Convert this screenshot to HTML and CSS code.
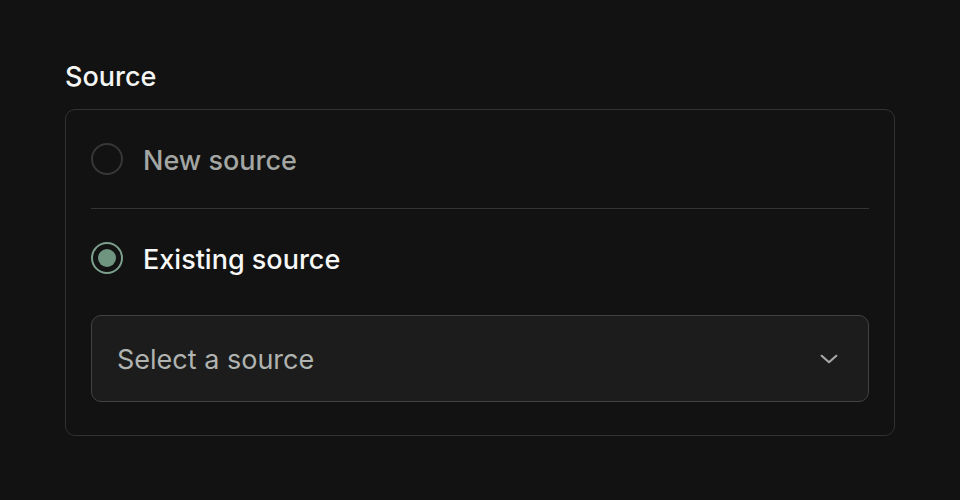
FILE: index.html
```html
<!DOCTYPE html>
<html>
<head>
<meta charset="utf-8">
<link rel="stylesheet" href="styles.css">
</head>
<body>
<div class="page">
  <div class="field">
    <div class="label">Source</div>
    <div class="card">
      <div class="option">
        <span class="radio"></span>
        <span class="opt-text muted">New source</span>
      </div>
      <div class="divider"></div>
      <div class="option">
        <span class="radio checked"><span class="dot"></span></span>
        <span class="opt-text active">Existing source</span>
      </div>
      <div class="select">
        <span class="placeholder">Select a source</span>
        <svg class="chevron" width="22" height="22" viewBox="0 0 24 24" fill="none" stroke="currentColor" stroke-width="2.4" stroke-linecap="round" stroke-linejoin="round"><path d="M4 8.5l8 7 8-7"/></svg>
      </div>
    </div>
  </div>
</div>
</body>
</html>
```
FILE: styles.css
```css
html, body {
  margin: 0;
  padding: 0;
  background: #111211;
  font-family: Inter, "Noto Sans", "Liberation Sans", sans-serif;
}
.page {
  padding: 59px 65px 0 65px;
  width: 830px;
}
.label {
  color: #f4f5f4;
  font-size: 27px;
  font-weight: 500;
  line-height: 36px;
  margin-bottom: 14px;
}
.card {
  border: 1px solid #313331;
  border-radius: 10px;
  padding: 0 25px 33px 25px;
}
.option {
  display: flex;
  align-items: center;
  height: 98px;
  gap: 20px;
}
.radio {
  box-sizing: border-box;
  width: 32px;
  height: 32px;
  border-radius: 50%;
  border: 2px solid #363836;
  display: flex;
  align-items: center;
  justify-content: center;
  flex: none;
}
.radio.checked {
  border-color: #7d9f8d;
}
.dot {
  width: 18px;
  height: 18px;
  border-radius: 50%;
  background: #6f9581;
}
.opt-text {
  font-size: 27px;
  font-weight: 500;
  padding-top: 2px;
}
.muted { color: #a3a6a3; }
.active { color: #f6f7f6; }
.divider {
  height: 1px;
  background: #333533;
}
.select {
  margin-top: 8px;
  height: 85px;
  border: 1px solid #414341;
  border-radius: 10px;
  background: #1b1c1b;
  display: flex;
  align-items: center;
  justify-content: space-between;
  padding: 0 28px 0 25px;
}
.placeholder {
  color: #b0b3b0;
  font-size: 27px;
  padding-top: 2px;
}
.chevron {
  color: #a5a8a5;
}
```
